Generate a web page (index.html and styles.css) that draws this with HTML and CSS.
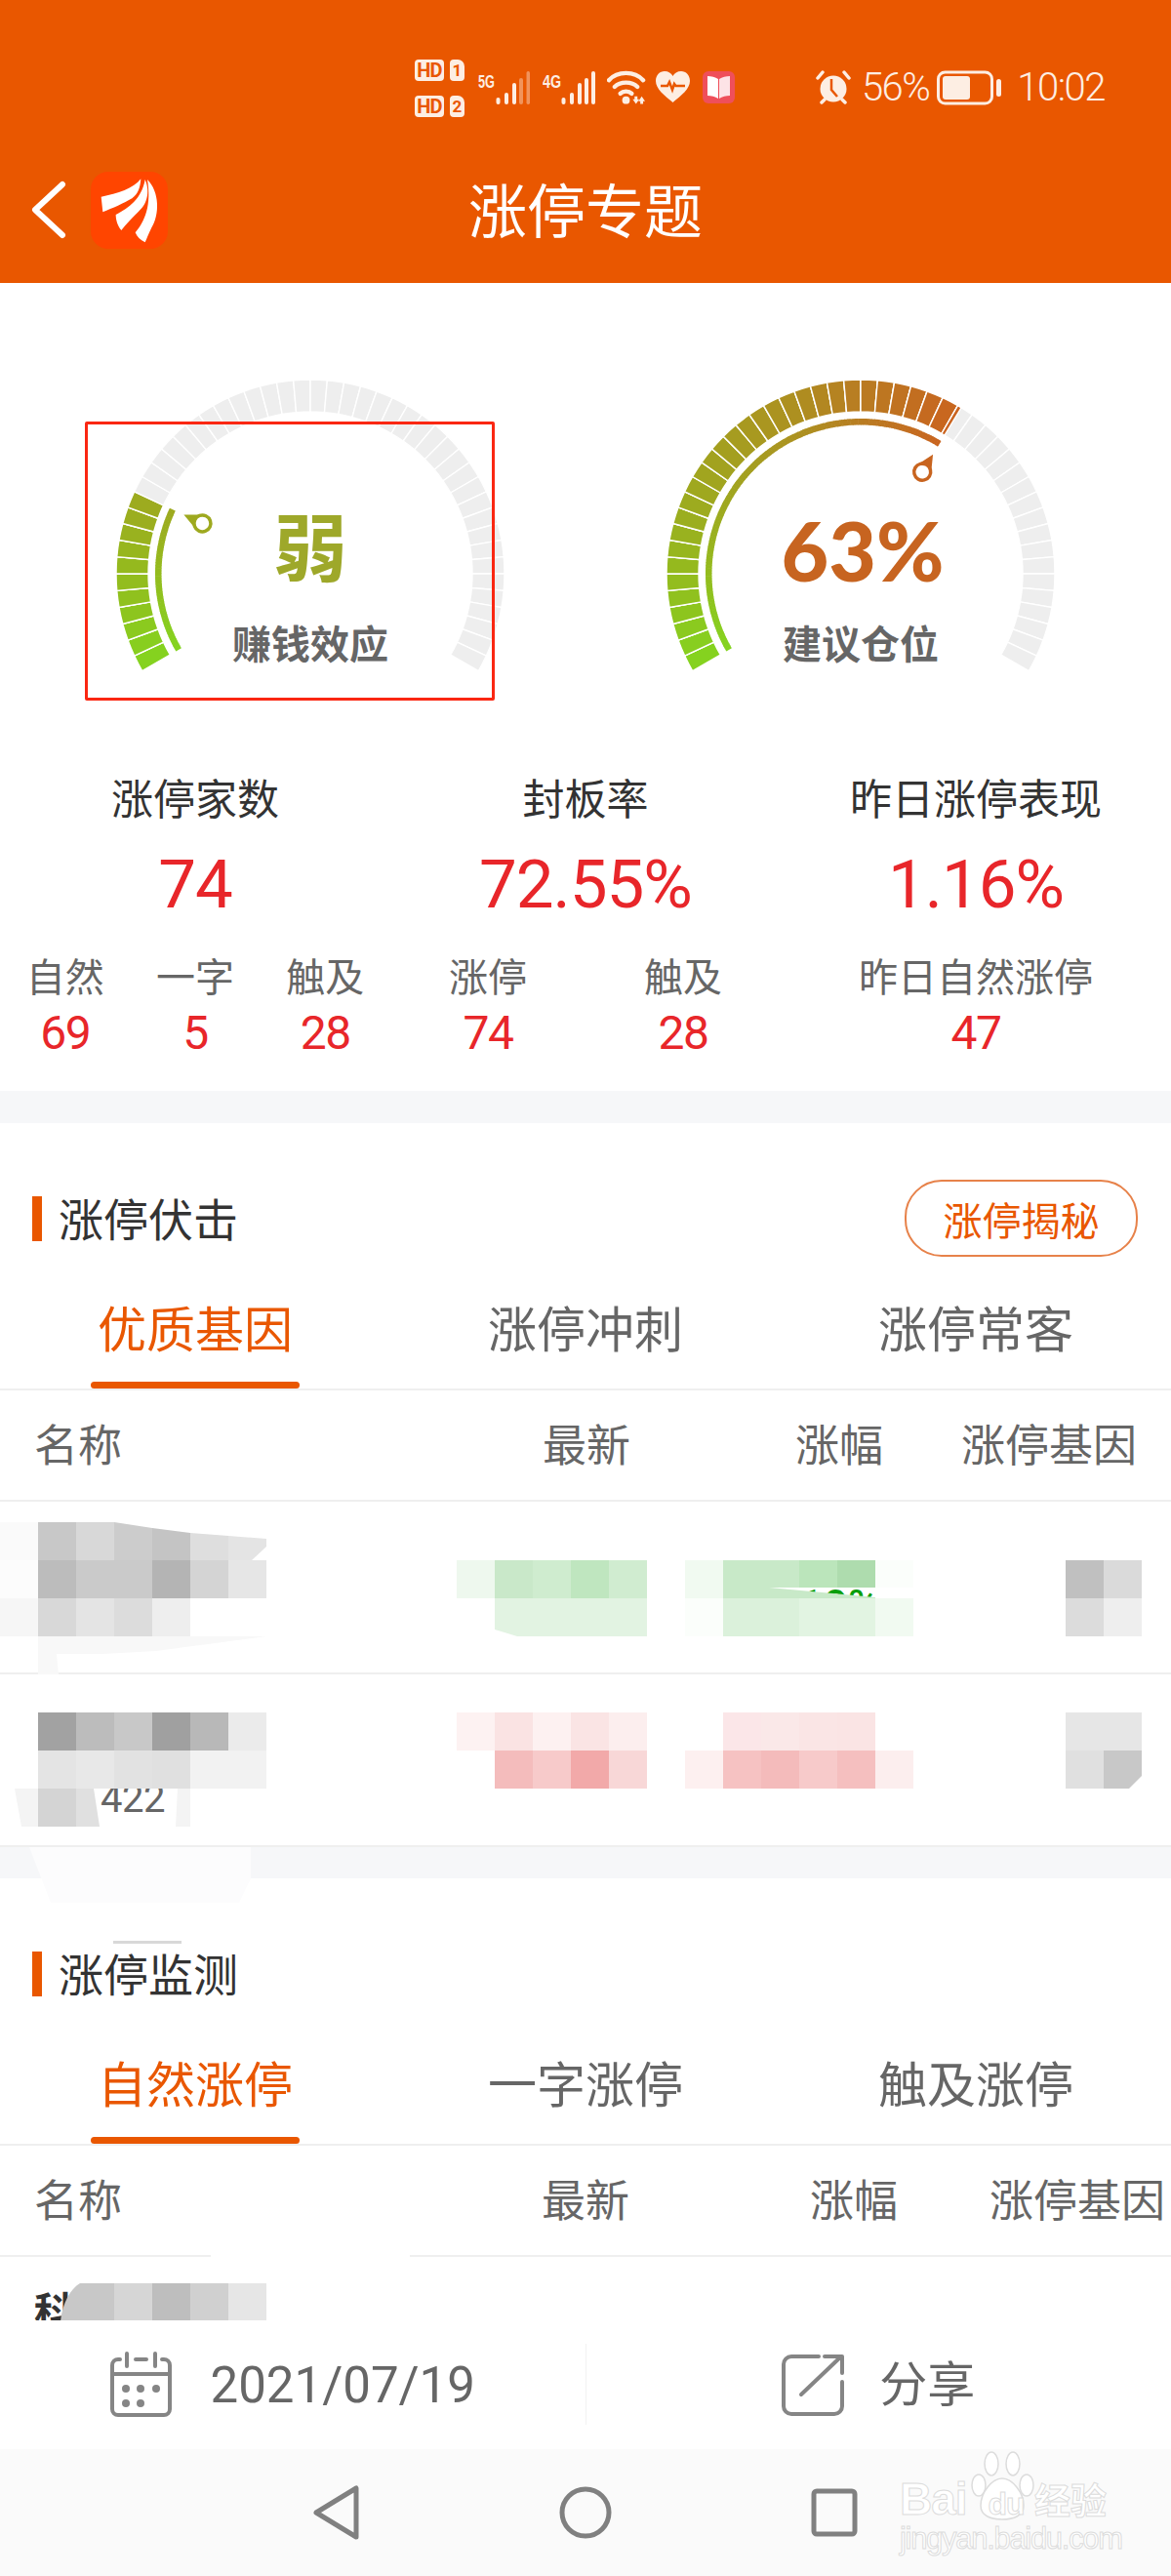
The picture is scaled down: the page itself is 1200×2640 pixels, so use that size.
FILE: index.html
```html
<!DOCTYPE html>
<html>
  <head>
    <meta charset="utf-8">
    <title>涨停专题</title>
    <link rel="stylesheet" href="styles.css">
  </head>

  <body>
    <div class="scroller">
      <header class="app-header">
        <div class="status-bar">
          <div class="sims">
            <div class="sim"><span class="hd">HD</span><span class="card">1</span></div>
            <div class="sim"><span class="hd">HD</span><span class="card">2</span></div>
          </div>
          <svg class="signal" width="53" height="36" viewBox="0 0 53 36">
            <text x="0" y="18" textLength="17" lengthAdjust="spacingAndGlyphs">5G</text>
            <rect x="18.5" y="28" width="4" height="7" rx="2"/>
            <rect x="27" y="23" width="4" height="12" rx="2"/>
            <rect x="35" y="13" width="4" height="22" rx="2"/>
            <rect x="42" y="8" width="4" height="27" rx="2" opacity=".4"/>
            <rect x="49.5" y="1" width="3.5" height="34" rx="1.7" opacity=".4"/>
          </svg>
          <svg class="signal sig-four" width="54" height="36" viewBox="0 0 54 36">
            <text x="0" y="18" textLength="19" lengthAdjust="spacingAndGlyphs">4G</text>
            <rect x="19.5" y="28" width="4" height="7" rx="2"/>
            <rect x="28" y="23" width="4" height="12" rx="2"/>
            <rect x="36" y="13" width="4" height="22" rx="2"/>
            <rect x="43" y="8" width="4" height="27" rx="2"/>
            <rect x="50" y="1" width="4" height="34" rx="2"/>
          </svg>
          <svg class="icon-light" width="40" height="36" viewBox="0 0 41 36">
            <path class="line" d="M2 10C11 0 29 0 38 10"/>
            <path class="line" d="M8 17C14 11 26 11 32 17"/>
            <path class="line" d="M14 24C17 21 23 21 26 24"/>
            <circle cx="20" cy="31" r="4"/>
            <path d="M28 28h3v3h2l-3.5 5-3.500-5h2zM34 36h3v-3h2l-3.500-5-3.500 5h2z" transform="translate(1 -1)"/>
          </svg>
          <svg class="icon-light heart" width="35" height="36" viewBox="0 0 35 36">
            <path d="M17.500 33C9 26 0 19 0 11 0 5 4 1 9 1c4 0 7 2 8.500 5C19 3 22 1 26 1c5 0 9 4 9 10 0 8-9 15-17.500 22z"/>
            <path class="pulse" d="M5 16h7l2-4 3 8 2-6 1.500 2H30"/>
          </svg>
          <svg class="book" width="33" height="36" viewBox="0 0 33 36">
            <rect x="0" y="1" width="33" height="33" rx="6" fill="#ef4f5a"/>
            <path d="M5 6c4 0 8 1 11 3v20c-3-2-7-3-11-3z" fill="#fff"/>
            <path d="M28 6c-4 0-8 1-11 3v20c3-2 7-3 11-3z" fill="#fde3e6"/>
          </svg>
          <svg class="icon-light alarm" width="36" height="36" viewBox="0 0 36 36">
            <circle cx="18" cy="19" r="13.500"/>
            <path class="line thin" d="M2 8L7 2M34 8L29 2M6 33l3-3M30 33l-3-3"/>
            <path class="pulse" d="M16 9v11l6 7"/>
          </svg>
          <span class="status-text pct">56%</span>
          <svg class="battery" width="66" height="36" viewBox="0 0 66 36">
            <rect x="1.500" y="2" width="55" height="32" rx="7" fill="none" stroke="#fdeee3" stroke-width="3"/>
            <rect x="6" y="6" width="28" height="24" rx="3" fill="#fdeee3"/>
            <rect x="61" y="9" width="5" height="18" rx="2.500" fill="#fdeee3"/>
          </svg>
          <span class="status-text time">10:02</span>
        </div>
        <nav class="nav-bar">
          <svg class="back" width="40" height="60" viewBox="0 0 40 60">
            <path d="M32 4L4 30l28 26"/>
          </svg>
          <svg class="app-logo" width="79" height="79" viewBox="278 48 237 237">
            <rect x="278" y="48" width="237" height="237" rx="54" fill="#ff4500"/>
            <path fill="#fff" d="M310 125C360 115 410 100 432 70 430 95 425 115 405 130 380 145 345 160 315 172Z"/>
            <path fill="#fff" d="M355 180C395 160 435 130 445 72 462 110 450 150 425 170 405 190 385 210 372 228 360 215 355 195 355 180Z"/>
            <path fill="#fff" d="M415 235C445 200 465 150 452 72 490 110 490 180 465 220 455 240 450 255 445 265 430 258 420 248 415 235Z"/>
          </svg>
          <h1 class="nav-title">涨停专题</h1>
        </nav>
      </header>

      <section class="gauges">
        <div class="gauge">
          <svg class="dial" viewBox="0 0 400 400" data-sweep="55" data-color="#9ea91f"></svg>
          <div class="gauge-value weak">弱</div>
          <div class="gauge-label">赚钱效应</div>
          <div class="mark-box"></div>
        </div>
        <div class="gauge">
          <svg class="dial" viewBox="0 0 400 400" data-sweep="151.200" data-color="#c8641f"></svg>
          <div class="gauge-value percent">63%</div>
          <div class="gauge-label">建议仓位</div>
        </div>
      </section>

      <section class="stats">
        <div class="stat">
          <div class="stat-title">涨停家数</div>
          <div class="stat-value">74</div>
          <div class="stat-subs">
            <div><div class="sub-label">自然</div><div class="sub-value">69</div></div>
            <div><div class="sub-label">一字</div><div class="sub-value">5</div></div>
            <div><div class="sub-label">触及</div><div class="sub-value">28</div></div>
          </div>
        </div>
        <div class="stat">
          <div class="stat-title">封板率</div>
          <div class="stat-value">72.55%</div>
          <div class="stat-subs">
            <div><div class="sub-label">涨停</div><div class="sub-value">74</div></div>
            <div><div class="sub-label">触及</div><div class="sub-value">28</div></div>
          </div>
        </div>
        <div class="stat">
          <div class="stat-title">昨日涨停表现</div>
          <div class="stat-value">1.16%</div>
          <div class="stat-subs">
            <div><div class="sub-label">昨日自然涨停</div><div class="sub-value">47</div></div>
          </div>
        </div>
      </section>

      <div class="band"></div>

      <section class="panel">
        <div class="panel-head">
          <i class="panel-bar"></i>
          <h2 class="panel-title">涨停伏击</h2>
          <button class="pill">涨停揭秘</button>
        </div>
        <div class="tabs">
          <div class="tab active">优质基因<i></i></div>
          <div class="tab">涨停冲刺<i></i></div>
          <div class="tab">涨停常客<i></i></div>
        </div>
        <div class="table-row table-head first">
          <div class="name">名称</div>
          <div>最新</div>
          <div>涨幅</div>
          <div>涨停基因</div>
        </div>
        <div class="table-row stock first">
          <div class="name"></div>
          <div></div>
          <div class="down">10%</div>
          <div></div>
        </div>
        <div class="table-row stock first">
          <div class="name code">422</div>
          <div></div>
          <div></div>
          <div></div>
        </div>
      </section>

      <div class="band short"></div>

      <section class="panel">
        <div class="panel-head">
          <i class="panel-bar"></i>
          <h2 class="panel-title">涨停监测</h2>
        </div>
        <div class="tabs">
          <div class="tab active">自然涨停<i></i></div>
          <div class="tab">一字涨停<i></i></div>
          <div class="tab">触及涨停<i></i></div>
        </div>
        <div class="table-row table-head second">
          <div class="name">名称</div>
          <div>最新</div>
          <div>涨幅</div>
          <div>涨停基因</div>
        </div>
        <div class="table-row stock second">
          <div class="name hidden-name">科</div>
        </div>
      </section>
    </div>

    <footer class="toolbar">
      <div class="tool">
        <svg class="tool-icon" width="63" height="67" viewBox="0 0 63 67">
          <path d="M10 8H8a6 6 0 0 0-6 6v45a6 6 0 0 0 6 6h47a6 6 0 0 0 6-6V14a6 6 0 0 0-6-6h-2M26 8h11M2 23h59M17 2v13M46 2v13"/>
          <g class="dots">
            <circle cx="16" cy="38" r="4"/><circle cx="31" cy="38" r="4"/><circle cx="47" cy="38" r="4"/>
            <circle cx="16" cy="53" r="4"/><circle cx="31" cy="53" r="4"/>
          </g>
        </svg>
        <span class="tool-date">2021/07/19</span>
      </div>
      <div class="tool-divider"></div>
      <div class="tool share">
        <svg class="tool-icon" width="64" height="64" viewBox="0 0 64 64">
          <path d="M38 3H10a8 8 0 0 0-8 8v43a8 8 0 0 0 8 8h44a8 8 0 0 0 8-8V29M20 42L61 3M44 3h18v17"/>
        </svg>
        <span class="tool-share">分享</span>
      </div>
    </footer>

    <div class="system-nav">
      <svg class="sys-icon" width="60" height="60" viewBox="0 0 60 60">
        <path d="M50 5v50L9 30z"/>
      </svg>
      <svg class="sys-icon" width="60" height="60" viewBox="0 0 60 60">
        <circle cx="30" cy="30" r="24"/>
      </svg>
      <svg class="sys-icon" width="60" height="60" viewBox="0 0 60 60">
        <rect x="9" y="8" width="42" height="44" rx="3"/>
      </svg>
      <div class="watermark">
        <svg class="paw" width="66" height="72" viewBox="0 0 66 72">
          <ellipse cx="22" cy="13" rx="7" ry="12"/>
          <ellipse cx="44" cy="13" rx="7" ry="12"/>
          <ellipse cx="9" cy="35" rx="7" ry="11"/>
          <ellipse cx="58" cy="35" rx="7" ry="11"/>
          <path d="M33 28c10 0 22 14 22 28 0 10-10 14-22 14S11 66 11 56c0-14 12-28 22-28z"/>
        </svg>
        <div class="wm-top"><span class="wm-bai">Bai</span><span class="wm-du">du</span><span class="wm-cn">经验</span></div>
        <div class="wm-url">jingyan.baidu.com</div>
      </div>
    </div>

    <!-- mosaic the screenshot's author painted over the stock names -->
    <svg class="mosaic" width="1200" height="2640" viewBox="0 0 1200 2640">
      <rect x="0" y="1560" fill="#fafafa"/><rect x="39" y="1560" fill="#c8c8c8"/><rect x="78" y="1560" fill="#d8d8d8"/>
      <polygon points="117,1560 156,1566 156,1599 117,1599" fill="#cccccc"/>
      <polygon points="156,1566 195,1571 195,1599 156,1599" fill="#c4c4c4"/>
      <polygon points="195,1571 234,1574 234,1599 195,1599" fill="#dedede"/>
      <polygon points="234,1574 273,1577 273,1585 258,1599 234,1599" fill="#e4e4e4"/>
      <rect x="0" y="1599" fill="#fcfcfc"/><rect x="39" y="1599" fill="#bcbcbc"/><rect x="78" y="1599" fill="#cacaca"/><rect x="117" y="1599" fill="#cacaca"/><rect x="156" y="1599" fill="#b4b4b4"/><rect x="195" y="1599" fill="#d4d4d4"/><rect x="234" y="1599" fill="#e6e6e6"/>
      <rect x="0" y="1638" fill="#f6f6f6"/><rect x="39" y="1638" fill="#d8d8d8"/><rect x="78" y="1638" fill="#e4e4e4"/><rect x="117" y="1638" fill="#dcdcdc"/><rect x="156" y="1638" fill="#eeeeee"/>
      <polygon points="39,1677 273,1677 160,1692 105,1695 58,1695 60,1716 39,1716" fill="#f8f8f8"/>

      <rect x="468" y="1599" fill="#eef8ee"/><rect x="507" y="1599" fill="#c9e8c9"/><rect x="546" y="1599" fill="#cfeccf"/><rect x="585" y="1599" fill="#bfe6bf"/><rect x="624" y="1599" fill="#d0ecd0"/>
      <polygon points="507,1638 663,1638 663,1677 530,1677 507,1670" fill="#e2f3e2"/>
      <rect x="702" y="1599" fill="#f1faf1"/><rect x="741" y="1599" fill="#c8e9c8"/>
      <polygon points="780,1599 819,1599 819,1627 780,1627" fill="#c8e9c8"/>
      <rect x="819" y="1599" class="cut" fill="#bbe5bb"/><rect x="858" y="1599" class="cut" fill="#aedcae"/>
      <polygon points="780,1627 788,1627 897,1637 897,1638 780,1638" fill="#c8e9c8"/>
      <polygon points="897,1599 936,1599 936,1627 897,1627" fill="#fbfefb"/>
      <rect x="702" y="1638" fill="#fbfefb"/><rect x="741" y="1638" fill="#dbf1db"/><rect x="780" y="1638" fill="#dbf1db"/><rect x="819" y="1638" fill="#e2f4e2"/><rect x="858" y="1638" fill="#e2f4e2"/><rect x="897" y="1638" fill="#f1faf1"/>
      <rect x="1092" y="1599" fill="#c0c0c0"/><rect x="1131" y="1599" fill="#dadada"/><rect x="1092" y="1638" fill="#dcdcdc"/><rect x="1131" y="1638" fill="#eeeeee"/>

      <rect x="39" y="1755" fill="#a2a2a2"/><rect x="78" y="1755" fill="#bcbcbc"/><rect x="117" y="1755" fill="#c8c8c8"/><rect x="156" y="1755" fill="#a0a0a0"/><rect x="195" y="1755" fill="#b8b8b8"/><rect x="234" y="1755" fill="#ebebeb"/>
      <rect x="39" y="1794" fill="#e4e4e4"/><rect x="78" y="1794" fill="#e8e8e8"/><rect x="117" y="1794" fill="#e2e2e2"/><rect x="156" y="1794" fill="#e0e0e0"/><rect x="195" y="1794" fill="#f2f2f2"/><rect x="234" y="1794" fill="#f2f2f2"/>
      <polygon points="15,1833 39,1833 39,1872 22,1872" fill="#f4f4f4"/>
      <rect x="39" y="1833" fill="#d4d4d4"/>
      <polygon points="78,1833 96,1833 102,1872 78,1872" fill="#e0e0e0"/>
      <polygon points="182,1833 195,1833 195,1872 180,1872" fill="#f4f4f4"/>

      <rect x="468" y="1755" fill="#fdf2f2"/><rect x="507" y="1755" fill="#fae3e3"/><rect x="546" y="1755" fill="#fdf1f1"/><rect x="585" y="1755" fill="#fae4e4"/><rect x="624" y="1755" fill="#fceeee"/>
      <rect x="507" y="1794" fill="#f4bcbc"/><rect x="546" y="1794" fill="#f7caca"/><rect x="585" y="1794" fill="#f2a9a9"/><rect x="624" y="1794" fill="#f8d7d7"/>
      <rect x="741" y="1755" fill="#fbe6e8"/><rect x="780" y="1755" fill="#fae8e8"/><rect x="819" y="1755" fill="#fae5e5"/><rect x="858" y="1755" fill="#fae4e4"/>
      <rect x="702" y="1794" fill="#fdf0f0"/><rect x="741" y="1794" fill="#f6c2c2"/><rect x="780" y="1794" fill="#f4bbbb"/><rect x="819" y="1794" fill="#f7caca"/><rect x="858" y="1794" fill="#f5bfbf"/><rect x="897" y="1794" fill="#fceeee"/>
      <rect x="1092" y="1755" fill="#e6e6e6"/><rect x="1131" y="1755" fill="#e6e6e6"/>
      <rect x="1092" y="1794" fill="#e0e0e0"/>
      <polygon points="1131,1794 1170,1794 1170,1820 1157,1833 1131,1833" fill="#c8c8c8"/>

      <path d="M30 1893H257V1925L245 1950H52Z" fill="#fcfcfd"/>
      <rect x="116" y="1989" class="wide" fill="#d8d8d8"/>

      <rect x="216" y="2309" class="gap" fill="#fff"/>
      <path d="M62 2379C64 2360 72 2346 82 2340H117V2379Z" fill="#c8c8c8"/>
      <rect x="117" y="2340" fill="#d6d6d6"/><rect x="156" y="2340" fill="#bebebe"/><rect x="195" y="2340" fill="#d0d0d0"/><rect x="234" y="2340" fill="#e6e6e6"/>
      <rect x="0" y="2378" class="tall-gap" fill="#fff"/>
    </svg>

    <script src="gauge.js"></script>
  </body>
</html>
```

FILE: styles.css
```css
* {
  box-sizing: border-box;
  margin: 0;
}
html, body {
  width: 1200px;
  height: 2640px;
  overflow: hidden;
}
body {
  position: relative;
  display: flex;
  flex-direction: column;
  background: #fff;
  font-family: Roboto, "Noto Sans CJK SC", sans-serif;
  color: #333;
}
.scroller {
  height: 2390px;
  overflow: hidden;
  flex-shrink: 0;
}

/* header */
.app-header {
  height: 290px;
  background: #e95700;
}
.status-bar {
  display: flex;
  align-items: center;
  justify-content: flex-end;
  height: 150px;
  padding: 30px 68px 0 0;
  color: #fdeee3;
}
.status-bar > svg {
  margin-left: 12px;
}
.sims {
  display: flex;
  flex-direction: column;
  gap: 15px;
  margin-right: 2px;
}
.sim {
  display: flex;
  gap: 6px;
}
.hd, .card {
  height: 22px;
  background: #fdeee3;
  border-radius: 4px;
  color: #e95700;
  font-size: 20px;
  font-weight: 700;
  line-height: 22px;
  text-align: center;
}
.hd {
  width: 30px;
  letter-spacing: -1px;
}
.card {
  width: 15px;
  border-top-right-radius: 7px;
  font-size: 17px;
}
.signal {
  fill: #fdeee3;
}
.signal text {
  font-size: 19px;
  font-weight: 700;
  font-family: "Liberation Sans", sans-serif;
}
.status-bar > .sig-four {
  margin-left: 13px;
}
.status-bar > .heart {
  margin-left: 10px;
}
.status-bar > .book {
  margin-left: 13px;
}
.icon-light {
  fill: #fdeee3;
}
.line {
  fill: none;
  stroke: #fdeee3;
  stroke-width: 4.5;
  stroke-linecap: round;
}
.line.thin {
  stroke-width: 3.5;
}
.pulse {
  fill: none;
  stroke: #e95700;
  stroke-width: 2.5;
}
.status-bar > .alarm {
  margin-left: 83px;
}
.status-text {
  font-size: 40px;
  font-weight: 300;
  line-height: 40px;
  letter-spacing: -1.500px;
}
.pct {
  margin-left: 11px;
}
.status-bar > .battery {
  margin-left: 8px;
}
.time {
  margin-left: 16px;
}
.nav-bar {
  position: relative;
  display: flex;
  align-items: center;
  height: 140px;
  padding: 0 0 10px 32px;
}
.back {
  fill: none;
  stroke: #fff;
  stroke-width: 6;
  stroke-linecap: round;
  stroke-linejoin: round;
}
.app-logo {
  margin-left: 21px;
}
.nav-title {
  position: absolute;
  left: 0;
  right: 0;
  top: 34px;
  color: #fff;
  font-size: 60px;
  font-weight: 400;
  line-height: 70px;
  text-align: center;
}

/* gauges */
.gauges {
  display: flex;
  justify-content: center;
  gap: 164px;
  padding-top: 98px;
}
.gauge {
  position: relative;
  width: 400px;
  height: 400px;
  padding-top: 131px;
  text-align: center;
}
.dial {
  position: absolute;
  left: 0;
  top: 0;
  width: 400px;
  height: 400px;
}
.gauge-value {
  position: relative;
  height: 90px;
  line-height: 90px;
  font-weight: 700;
}
.weak {
  color: #9ea82a;
  font-size: 76px;
}
.percent {
  left: 2px;
  color: #c76420;
  font-family: Lato, sans-serif;
  font-size: 84px;
  font-weight: 900;
}
.gauge-label {
  position: relative;
  margin-top: 28px;
  color: #666;
  font-size: 40px;
  font-weight: 700;
  line-height: 50px;
}
.mark-box {
  position: absolute;
  left: -31px;
  top: 44px;
  width: 420px;
  height: 286px;
  border: 3px solid #fa2712;
  border-radius: 2px;
}

/* stats */
.stats {
  display: grid;
  grid-template-columns: repeat(3, 1fr);
  height: 330px;
  padding-top: 7px;
  text-align: center;
}
.stat-title {
  font-size: 43px;
  line-height: 50px;
}
.stat-value {
  margin-top: 22px;
  color: #e8262a;
  font-size: 69px;
  line-height: 80px;
  letter-spacing: -1px;
}
.stat-subs {
  display: flex;
  margin-top: 31px;
}
.stat-subs > div {
  flex: 1;
}
.sub-label {
  color: #666;
  font-size: 40px;
  line-height: 50px;
}
.sub-value {
  margin-top: 6px;
  color: #e8262a;
  font-size: 48px;
  line-height: 50px;
  letter-spacing: -1.500px;
}
.band {
  height: 33px;
  background: #f6f7f9;
}
.band.short {
  height: 32px;
}

/* panels */
.panel-head {
  display: flex;
  align-items: center;
  height: 79px;
  margin-top: 58px;
  padding: 0 34px 0 33px;
}
.panel-bar {
  width: 10px;
  height: 46px;
  background: #e95700;
}
.panel-title {
  margin-left: 17px;
  padding-top: 5px;
  font-size: 46px;
  font-weight: 400;
  line-height: 60px;
}
.pill {
  width: 239px;
  height: 79px;
  margin-left: auto;
  padding: 0;
  background: #fff;
  border: 2px solid #e7824a;
  border-radius: 38px;
  color: #e95700;
  font-family: inherit;
  font-size: 40px;
}
.tabs {
  display: grid;
  grid-template-columns: repeat(3, 1fr);
  border-bottom: 2px solid #efefef;
}
.tab {
  display: flex;
  flex-direction: column;
  align-items: center;
  padding-top: 46px;
  color: #666;
  font-size: 50px;
  line-height: 60px;
}
.tab i {
  display: block;
  width: 214px;
  height: 7px;
  margin-top: 22px;
  border-radius: 4px;
}
.tab.active {
  color: #e95700;
}
.tab.active i {
  background: #e95700;
}
.table-row {
  display: grid;
  padding-left: 35px;
  border-bottom: 2px solid #efefef;
  text-align: center;
  white-space: nowrap;
}
.table-row.first {
  grid-template-columns: 432px 268px 250px 178px;
}
.table-row.second {
  grid-template-columns: 429px 272px 278px 178px;
}
.table-head {
  height: 114px;
  padding-top: 28px;
  color: #666;
  font-size: 45px;
  line-height: 60px;
}
.name {
  text-align: left;
}
.stock {
  height: 177px;
  font-size: 44px;
  line-height: 60px;
}
.down {
  padding-top: 77px;
  color: #0a9e0a;
  font-weight: 500;
}
.code {
  padding: 100px 0 0 68px;
  color: #666;
  font-size: 40px;
  line-height: 56px;
  letter-spacing: -0.500px;
}
.hidden-name {
  padding-top: 37px;
  font-size: 40px;
  font-weight: 700;
  line-height: 40px;
}

/* bottom bars */
.toolbar {
  display: flex;
  align-items: center;
  height: 120px;
  padding-bottom: 13px;
  background: #fff;
}
.tool {
  display: flex;
  flex: 1;
  align-items: center;
  justify-content: center;
  gap: 40px;
  color: #666;
}
.tool.share {
  gap: 36px;
}
.tool-icon {
  fill: none;
  stroke: #858585;
  stroke-width: 4;
  stroke-linecap: round;
  stroke-linejoin: round;
}
.dots {
  fill: #858585;
  stroke: none;
}
.tool-date {
  padding-top: 3px;
  font-size: 51px;
  line-height: 60px;
}
.tool-share {
  padding-top: 2px;
  font-size: 49px;
  line-height: 60px;
}
.tool-divider {
  width: 1px;
  height: 83px;
  background: #f2f2f2;
}
.system-nav {
  position: relative;
  display: flex;
  flex: 1;
  align-items: center;
  justify-content: center;
  gap: 195px;
  background: #fafafa;
}
.sys-icon {
  fill: none;
  stroke: #808080;
  stroke-width: 5;
  stroke-linejoin: round;
}

/* baidu watermark, sits over the nav bar */
.watermark {
  position: absolute;
  left: 922px;
  top: 2px;
  width: 214px;
  height: 102px;
  color: #fff;
  -webkit-text-stroke: 1px #dcdcdc;
}
.paw {
  position: absolute;
  left: 72px;
  top: 0;
  fill: #fff;
  stroke: #dcdcdc;
  stroke-width: 1.500;
}
.wm-top {
  position: absolute;
  left: 0;
  top: 24px;
  display: flex;
  align-items: baseline;
  font-family: "Liberation Sans", sans-serif;
  font-weight: 700;
  line-height: 50px;
}
.wm-bai {
  width: 80px;
  font-size: 46px;
  letter-spacing: -1px;
}
.wm-du {
  position: relative;
  width: 58px;
  font-size: 32px;
  letter-spacing: -1px;
  text-align: center;
}
.wm-cn {
  font-family: "Noto Sans CJK SC", sans-serif;
  font-size: 37px;
}
.wm-url {
  position: absolute;
  left: 0;
  top: 72px;
  font-family: "Liberation Sans", sans-serif;
  font-size: 31px;
  line-height: 36px;
  letter-spacing: -1.300px;
  white-space: nowrap;
}

.mosaic {
  position: absolute;
  left: 0;
  top: 0;
  pointer-events: none;
}
.mosaic rect {
  width: 39px;
  height: 39px;
}
.mosaic rect.cut {
  height: 28px;
}
.mosaic rect.wide {
  width: 70px;
  height: 3px;
}
.mosaic rect.gap {
  width: 204px;
  height: 7px;
}
.mosaic rect.tall-gap {
  width: 273px;
  height: 14px;
}
```

FILE: gauge.js
```js
// draws both dials: 48 blocks of 5deg, coloured up to data-sweep
const NS = 'http://www.w3.org/2000/svg';
const STOPS = [
  [0, [132, 212, 31]],
  [30, [148, 187, 30]],
  [55, [158, 169, 31]],
  [100, [174, 142, 32]],
  [120, [185, 124, 34]],
  [152, [202, 99, 31]]
];

function colorAt(t) {
  for (let i = 1; i < STOPS.length; i++) {
    if (t <= STOPS[i][0]) {
      const [a, ca] = STOPS[i - 1];
      const [b, cb] = STOPS[i];
      const k = (t - a) / (b - a);
      return `rgb(${ca.map((v, n) => Math.round(v + (cb[n] - v) * k)).join(',')})`;
    }
  }
  return 'rgb(202,99,31)';
}

function point(r, t) {
  const rad = (t - 120) * Math.PI / 180;
  return `${200 + r * Math.sin(rad)} ${200 - r * Math.cos(rad)}`;
}

function slice(r0, r1, t0, t1) {
  return `M${point(r0, t0)}L${point(r1, t0)}A${r1} ${r1} 0 0 1 ${point(r1, t1)}L${point(r0, t1)}A${r0} ${r0} 0 0 0 ${point(r0, t0)}Z`;
}

function add(svg, name, attrs) {
  const el = document.createElementNS(NS, name);
  for (const key in attrs) el.setAttribute(key, attrs[key]);
  svg.appendChild(el);
  return el;
}

document.querySelectorAll('.dial').forEach((svg) => {
  const sweep = parseFloat(svg.dataset.sweep);
  for (let i = 0; i < 48; i++) {
    const t0 = i * 5;
    const attrs = { stroke: '#fff', 'stroke-width': 1.4 };
    add(svg, 'path', { d: slice(166, 199, t0, t0 + 5), fill: '#eeeeee', ...attrs });
    if (t0 < sweep) {
      const t1 = Math.min(t0 + 5, sweep);
      add(svg, 'path', { d: slice(166, 199, t0, t1), fill: colorAt(t0 + 2.5), ...attrs });
    }
  }
  for (let t = 0; t < sweep; t += 1) {
    const t1 = Math.min(t + 1.2, sweep);
    add(svg, 'path', { d: slice(152.5, 159, t, t1), fill: colorAt(t) });
  }
  const g = add(svg, 'g', { transform: `rotate(${sweep - 120} 200 200)` });
  add(g, 'polygon', { points: '200,57 191,76 209,76', fill: svg.dataset.color });
  add(g, 'circle', { cx: 200, cy: 78, r: 8.5, fill: '#fff', stroke: svg.dataset.color, 'stroke-width': 3.5 });
});
```
